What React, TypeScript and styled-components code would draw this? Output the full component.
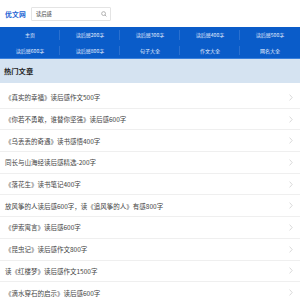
import styled, { createGlobalStyle } from 'styled-components';

const GlobalStyle = createGlobalStyle`
  body {
    margin: 0;
    background: #ffffff;
    font-family: 'Noto Sans CJK SC', 'Noto Sans', sans-serif;
  }
`;

const Page = styled.div`
  width: 300px;
  height: 300px;
  overflow: hidden;
  background: #fff;
`;

const Header = styled.div`
  height: 27px;
  display: flex;
  align-items: center;
  padding-left: 5px;
  box-sizing: border-box;
`;

const Logo = styled.span`
  font-size: 6.8px;
  font-weight: bold;
  color: #1b63d3;
  letter-spacing: 0.2px;
`;

const Search = styled.div`
  margin-left: 5px;
  width: 80px;
  height: 14px;
  box-sizing: border-box;
  border: 1px solid #e4e4e4;
  border-radius: 1px;
  display: flex;
  align-items: center;
  justify-content: space-between;
  padding: 0 3px 0 4px;
  font-size: 5.3px;
  color: #333;
`;

const Nav = styled.div`
  display: grid;
  grid-template-columns: repeat(5, 1fr);
  grid-auto-rows: 15.5px;
  background: #0a5cc9;
  border-bottom: 1px solid #3a80dc;
`;

const NavItem = styled.div<{ $last?: boolean }>`
  display: flex;
  align-items: center;
  justify-content: center;
  font-size: 5px;
  color: #eaf2ff;
  position: relative;
  &::after {
    content: '';
    display: ${(p) => (p.$last ? 'none' : 'block')};
    position: absolute;
    right: 0;
    top: 3px;
    bottom: 3px;
    width: 1px;
    background: #2a70d0;
  }
`;

const SectionTitle = styled.div`
  height: 24px;
  background: #d5e3f1;
  display: flex;
  align-items: center;
  padding-left: 4px;
  font-size: 7.3px;
  font-weight: bold;
  color: #222;
`;

const List = styled.div`
  padding-top: 4px;
`;

const Row = styled.div`
  height: 21.7px;
  box-sizing: border-box;
  border-bottom: 1px solid #efefef;
  display: flex;
  align-items: center;
  justify-content: space-between;
  padding: 0 7px 0 5px;
  font-size: 6.5px;
  color: #444;
`;

const Chevron = styled.svg`
  width: 4px;
  height: 7px;
`;

const navItems = [
  '主页',
  '读后感200字',
  '读后感300字',
  '读后感400字',
  '读后感500字',
  '读后感600字',
  '读后感800字',
  '句子大全',
  '作文大全',
  '网名大全',
];

const articles = [
  '《真实的幸福》读后感作文500字',
  '《你若不勇敢，谁替你坚强》读后感600字',
  '《乌丢丢的奇遇》读书感悟400字',
  '同长与山海经读后感精选-200字',
  '《落花生》读书笔记400字',
  '放风筝的人读后感600字，读《追风筝的人》有感800字',
  '《伊索寓言》读后感600字',
  '《昆虫记》读后感作文800字',
  '读《红楼梦》读后感作文1500字',
  '《滴水穿石的启示》读后感600字',
];

export default function App() {
  return (
    <Page>
      <GlobalStyle />
      <Header>
        <Logo>优文网</Logo>
        <Search>
          <span>读后感</span>
          <svg width="6" height="6" viewBox="0 0 10 10">
            <circle cx="4.3" cy="4.3" r="3.2" fill="none" stroke="#999" strokeWidth="1.2" />
            <line x1="6.6" y1="6.6" x2="9" y2="9" stroke="#999" strokeWidth="1.3" />
          </svg>
        </Search>
      </Header>
      <Nav>
        {navItems.map((t, i) => (
          <NavItem key={t} $last={i % 5 === 4}>
            {t}
          </NavItem>
        ))}
      </Nav>
      <SectionTitle>热门文章</SectionTitle>
      <List>
        {articles.map((a) => (
          <Row key={a}>
            <span>{a}</span>
            <Chevron viewBox="0 0 4 7">
              <polyline points="0.6,0.6 3.2,3.5 0.6,6.4" fill="none" stroke="#cfcfcf" strokeWidth="0.8" />
            </Chevron>
          </Row>
        ))}
      </List>
    </Page>
  );
}
